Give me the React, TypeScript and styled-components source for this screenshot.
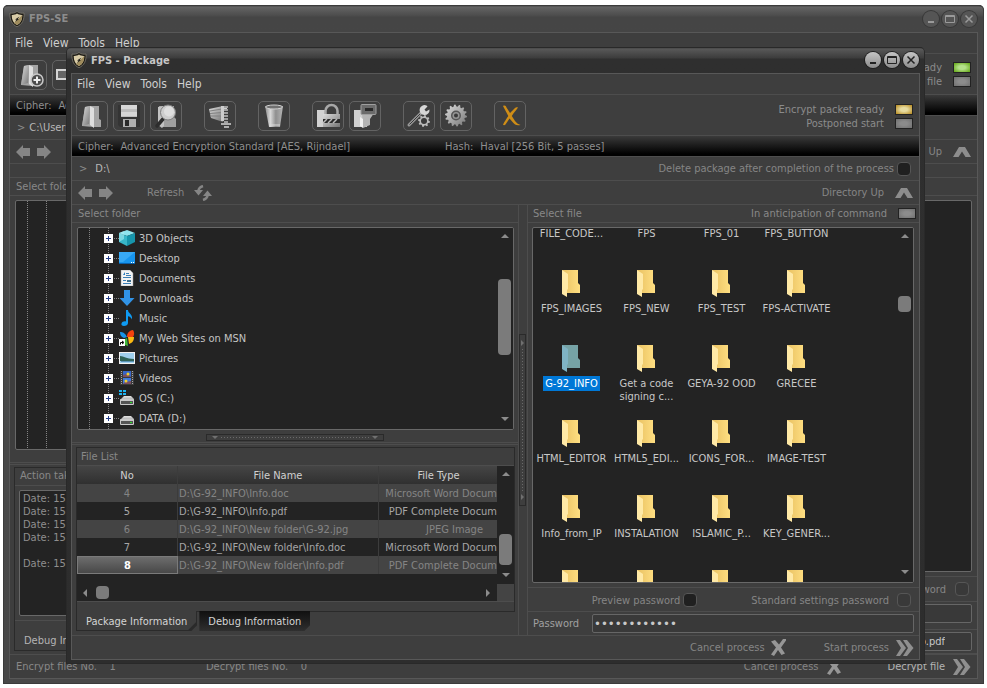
import React from "react";
import styled, { createGlobalStyle, css } from "styled-components";

const FONT = '"DejaVu Sans Condensed", "DejaVu Sans", sans-serif';

const GlobalStyle = createGlobalStyle`
  *, *::before, *::after { box-sizing: border-box; }
  body { margin: 0; background: #fff; font: 11px/15px ${FONT}; color: #888; }
  button, input { font: inherit; color: inherit; margin: 0; }
  button { padding: 0; border: 0; background: none; cursor: default; }
  ul { list-style: none; margin: 0; padding: 0; }
`;

/* ---------- window chrome ---------- */

const Desktop = styled.div`
  position: relative;
  display: flex;
  min-height: 100vh;
  padding: 5px 3px 4px;
`;

const Frame = styled.section<{ $front?: boolean }>`
  display: flex;
  flex-direction: column;
  border-radius: 5px 5px 0 0;
  ${(p) =>
    p.$front
      ? css`
          position: absolute;
          inset: 47px 62px 24px 66px;
          padding: 0 5px 4px;
          background: linear-gradient(#303030 0, #585858 2px, #3c3c3c 11px, #2f2f2f 12px, #2d2d2d 100%);
          box-shadow: inset 0 0 0 1px #292929;
        `
      : css`
          flex: 1;
          padding: 0 6px 5px;
          background: linear-gradient(#303030 0, #646464 2px, #4b4b4b 11px, #454545 12px, #484848 100%);
          box-shadow: inset 0 0 0 1px #3b3b3b;
        `}
`;

const TitleBar = styled.header<{ $front?: boolean }>`
  display: flex;
  align-items: center;
  gap: 4px;
  height: ${(p) => (p.$front ? 26 : 27)}px;
  padding-right: 1px;
  color: ${(p) => (p.$front ? "#c6c6c6" : "#8c8c8c")};
`;

const Title = styled.h1`
  flex: 1;
  margin: 0;
  font-size: 11px;
  font-weight: bold;
`;

const WindowButtons = styled.div`
  display: flex;
  gap: 3px;
`;

const RoundButton = styled.button<{ $front?: boolean }>`
  width: 16px;
  height: 16px;
  border-radius: 50%;
  color: ${(p) => (p.$front ? "#222" : "#9a9a9a")};
  background: ${(p) => (p.$front ? "linear-gradient(#c4c4c4, #8c8c8c)" : "#555")};
  box-shadow: 0 0 0 1px ${(p) => (p.$front ? "#1f1f1f" : "#383838")};
  svg { display: block; }
`;

const Body = styled.div`
  display: flex;
  flex: 1;
  flex-direction: column;
  min-height: 0;
  border: 1px solid #585858;
  background: #3e3e3e;
`;

const Row = styled.div<{ $h: number; $pad?: string }>`
  display: flex;
  flex: none;
  align-items: center;
  height: ${(p) => p.$h}px;
  padding: ${(p) => p.$pad ?? "0 5px"};
  border-bottom: 1px solid #4d4d4d;
`;

const FooterRow = styled(Row)`
  border-top: 1px solid #4d4d4d;
  border-bottom: 0;
`;

const MenuBar = styled.nav`
  display: flex;
  gap: 10px;
  font-size: 12px;
  color: #cfcfcf;
`;

const Spacer = styled.span`
  flex: 1;
`;

/* ---------- toolbar ---------- */

const ToolGroups = styled.div`
  display: flex;
  flex: 1;
  gap: 22px;
`;

const ToolGroup = styled.div`
  display: flex;
  gap: 5px;
`;

const ToolButton = styled.button`
  display: grid;
  place-items: center;
  width: 32px;
  height: 30px;
  border: 1px solid #636363;
  border-radius: 5px;
`;

const StatusList = styled.ul`
  color: #8b8b8b;
`;

const StatusItem = styled.li`
  display: flex;
  align-items: center;
  justify-content: flex-end;
  gap: 11px;
  height: 14px;
`;

const ledColors = {
  off: ["#8c8c8c", "#6f6f6f"],
  green: ["#b4e08a", "#5fa40e"],
  amber: ["#e6dba0", "#b4861a"],
};

const Led = styled.span<{ $c: keyof typeof ledColors }>`
  display: inline-block;
  width: 18px;
  height: 11px;
  border: 1px solid #222;
  background: radial-gradient(ellipse, ${(p) => ledColors[p.$c][0]} 30%, ${(p) => ledColors[p.$c][1]});
`;

const CipherBar = styled(Row)`
  color: #8f8f8f;
  background: linear-gradient(#3a3a3a, #000 90%);
`;

const CipherCell = styled.dl`
  display: flex;
  gap: 7px;
  width: 367px;
  margin: 0;
  white-space: nowrap;
  dd { margin: 0; }
`;

const Path = styled.span<{ $gap: number }>`
  display: flex;
  gap: ${(p) => p.$gap}px;
  color: #b8b8b8;
  i { font-style: normal; color: #8a8a8a; }
`;

const TextButton = styled.button<{ $gap?: number; $bright?: boolean }>`
  display: flex;
  align-items: center;
  gap: ${(p) => p.$gap ?? 11}px;
  color: ${(p) => (p.$bright ? "#b4b4b4" : "#858585")};
  white-space: nowrap;
`;

const NavArrows = styled.div`
  display: flex;
  gap: 5px;
  margin-right: 34px;
  svg { display: block; }
`;

const CheckLabel = styled.label<{ $gap?: number }>`
  display: flex;
  align-items: center;
  gap: ${(p) => p.$gap ?? 3}px;
  color: #858585;
`;

const Check = styled.input.attrs({ type: "checkbox" })`
  appearance: none;
  width: 14px;
  height: 14px;
  border: 1px solid #565656;
  border-radius: 4px;
  background: #202020;
  &:disabled { background: #393939; }
`;

/* ---------- panes ---------- */

const Panes = styled.main`
  display: flex;
  flex: 1;
  min-height: 0;
`;

const LeftPane = styled.section`
  display: flex;
  flex: 446 0 0;
  flex-direction: column;
  min-width: 0;
  border-right: 1px solid #4d4d4d;
`;

const RightPane = styled.section`
  display: flex;
  flex: 391 0 0;
  flex-direction: column;
  min-width: 0;
  border-left: 1px solid #4d4d4d;
`;

const Well = styled.div<{ $m: string }>`
  display: flex;
  flex: 1;
  min-height: 0;
  margin: ${(p) => p.$m};
  overflow: hidden;
  border: 1px solid #686868;
  border-radius: 2px;
  background: #232323;
`;

const Tree = styled.ul<{ $x1: number; $x2: number }>`
  flex: 1;
  overflow: hidden;
  color: #c4c4c4;
  background-image: linear-gradient(#848484 50%, transparent 50%), linear-gradient(#848484 50%, transparent 50%);
  background-position: ${(p) => p.$x1}px 0, ${(p) => p.$x2}px 0;
  background-size: 1px 2px;
  background-repeat: repeat-y;
`;

const TreeItem = styled.li`
  display: flex;
  align-items: center;
  height: 20px;
  padding-left: 26px;
`;

const Expander = styled.button`
  display: block;
  width: 9px;
  height: 9px;
  background: #fff;
  svg { display: block; }
`;

const Branch = styled.span`
  width: 6px;
  height: 1px;
  background: repeating-linear-gradient(90deg, transparent 0 1px, #848484 1px 2px);
`;

const TreeIcon = styled.svg`
  width: 16px;
  height: 16px;
  margin-right: 4px;
`;

const ScrollTrack = styled.div<{ $dir: "v" | "h"; $pad: string; $grow?: boolean }>`
  display: flex;
  flex: ${(p) => (p.$grow ? "1" : "none")};
  align-items: center;
  flex-direction: ${(p) => (p.$dir === "v" ? "column" : "row")};
  padding: ${(p) => p.$pad};
  background: #232323;
`;

const Gap = styled.span<{ $n: number }>`
  flex: ${(p) => p.$n} 0 0;
`;

const Thumb = styled.span<{ $w: number; $h: number }>`
  width: ${(p) => p.$w}px;
  height: ${(p) => p.$h}px;
  border-radius: 4px;
  background: #7b7b7b;
`;

const SplitRow = styled.div`
  display: flex;
  flex: none;
  align-items: flex-start;
  justify-content: center;
  height: 13px;
  padding-top: 4px;
  border-bottom: 1px solid #4d4d4d;
`;

const DoubleRule = styled.div<{ $h: number }>`
  flex: none;
  height: ${(p) => p.$h}px;
  border-top: 1px solid #3e3e3e;
  border-bottom: 1px solid #4d4d4d;
`;

const SplitColumn = styled.div`
  display: flex;
  flex: none;
  align-items: center;
  width: 8px;
`;

const Handle = styled.div<{ $v?: boolean }>`
  display: flex;
  align-items: center;
  justify-content: space-between;
  flex-direction: ${(p) => (p.$v ? "column" : "row")};
  width: ${(p) => (p.$v ? 7 : 178)}px;
  height: ${(p) => (p.$v ? 172 : 7)}px;
  padding: ${(p) => (p.$v ? "5px 0" : "0 5px")};
  border: 1px solid #2a2a2a;
  &::before, &::after {
    content: "";
    border: solid transparent;
    border-width: ${(p) => (p.$v ? "3px 0 3px 3px" : "3px 3px 0 3px")};
    border-${(p) => (p.$v ? "left" : "top")}-color: #707070;
  }
`;

const Dots = styled.span<{ $v?: boolean }>`
  flex: 1;
  margin: ${(p) => (p.$v ? "3px 0" : "0 3px")};
  ${(p) => (p.$v ? "width" : "height")}: 1px;
  background: repeating-linear-gradient(${(p) => (p.$v ? "180deg" : "90deg")}, #6a6a6a 0 1px, transparent 1px 3px);
`;

const Group = styled.div<{ $m: string }>`
  display: flex;
  flex: none;
  flex-direction: column;
  margin: ${(p) => p.$m};
  border: 1px solid #2a2a2a;
`;

const GroupCaption = styled.div<{ $h: number; $pad: string }>`
  flex: none;
  height: ${(p) => p.$h}px;
  padding: ${(p) => p.$pad};
  border-bottom: 1px solid #4d4d4d;
  white-space: nowrap;
  overflow: hidden;
`;

const TableArea = styled.div`
  display: flex;
  height: 118px;
  background: #232323;
`;

const TableClip = styled.div`
  flex: 1;
  min-width: 0;
`;

const Table = styled.table`
  width: 100%;
  table-layout: fixed;
  border-collapse: separate;
  border-spacing: 0;
  th, td {
    height: 18px;
    padding: 1px 1px 0;
    overflow: hidden;
    white-space: nowrap;
    font-weight: normal;
    border-right: 1px solid #3c3c3c;
  }
  th:last-child, td:last-child { padding-right: 0; border-right: 0; }
  th { color: #d0d0d0; background: linear-gradient(#454545, #303030); }
`;

const BodyRow = styled.tr<{ $alt: boolean; $selected?: boolean }>`
  color: ${(p) => (p.$alt ? "#848484" : "#a6a6a6")};
  background: ${(p) => (p.$alt ? "#444" : "#232323")};
  td:first-child {
    text-align: center;
    ${(p) =>
      p.$selected &&
      css`
        padding-top: 0;
        color: #fff;
        font-weight: bold;
        border: 1px solid #7a7a7a;
        background: linear-gradient(#6d6d6d, #484848);
      `}
  }
`;

const TypeText = styled.span<{ $short: boolean }>`
  display: block;
  padding-right: ${(p) => (p.$short ? 14 : 0)}px;
  text-align: right;
`;

const HScrollRow = styled.div`
  display: flex;
  height: 17px;
  padding-right: 17px;
  background: #444;
`;

const GroupFoot = styled.div`
  height: 10px;
  border-top: 1px solid #4d4d4d;
`;

const Tabs = styled.div<{ $m: string }>`
  display: flex;
  flex: none;
  gap: 2px;
  margin: ${(p) => p.$m};
`;

const Tab = styled.button<{ $active?: boolean }>`
  height: 20px;
  padding: 0 9px;
  margin-top: -1px;
  color: #d4d4d4;
  white-space: nowrap;
  clip-path: polygon(0 0, 100% 0, 100% calc(100% - 6px), calc(100% - 6px) 100%, 0 100%);
  ${(p) =>
    p.$active
      ? css`
          padding-top: 1px;
          border: solid #2a2a2a;
          border-width: 0 1px 1px;
          background: linear-gradient(135deg, #3e3e3e calc(100% - 6px), #2a2a2a calc(100% - 5px));
        `
      : css`
          background: linear-gradient(#101010, #2f2f2f);
        `}
`;

const FileGrid = styled.ul`
  display: grid;
  flex: 1;
  grid-template-columns: repeat(4, 75px);
  grid-auto-rows: 75px;
  margin-top: -33px;
  padding-left: 1px;
  color: #c8c8c8;
`;

const FileItem = styled.li`
  display: flex;
  flex-direction: column;
  align-items: center;
  gap: 4px;
  svg { flex: none; }
`;

const FileName = styled.span<{ $selected?: boolean }>`
  padding: 1px 2px;
  line-height: 13px;
  white-space: pre;
  ${(p) => p.$selected && css`color: #fff; background: #0078d7;`}
`;

const TextField = styled.input`
  flex: 1;
  min-width: 0;
  height: 19px;
  padding: 0 2px;
  border: 1px solid #666;
  border-radius: 2px;
  outline: 0;
  background: #393939;
  color: #c8c8c8;
  &[type="password"] { padding: 0 1px; font-size: 13px; }
`;

const OutputField = styled(TextField)`
  flex: none;
  width: 120px;
  padding-right: 26px;
  text-align: right;
`;

const FieldLabel = styled.label`
  width: 59px;
  color: #a0a0a0;
`;

const Log = styled.div`
  flex: 1;
  min-height: 124px;
  padding: 1px 3px;
  line-height: 13px;
  white-space: pre;
  color: #8f8f8f;
`;

const Count = styled.span<{ $w: number }>`
  width: ${(p) => p.$w}px;
  white-space: pre;
`;

/* ---------- drawings ---------- */

const Shield = () => (
  <svg width="16" height="16" viewBox="0 0 16 16">
    <path d="M8 .5c2 1.500 4.500 2 7 1.500C15.500 9 13 13.500 8 15.700 3 13.500.5 9 1 2 3.500 2.500 6 2 8 .5z" fill="#1c1a14" stroke="#7d7a70" strokeWidth=".8" />
    <path d="M8 2.500c1.700 1.200 3.300 1.500 5.300 1.400C13.300 9 11.500 12.200 8 14 4.500 12.200 2.700 9 2.700 3.900 4.700 4 6.300 3.700 8 2.500z" fill="#d8cba6" />
    <path d="M13.300 3.900C13.300 9 11.500 12.200 8 14L5 12z" fill="#a08d5e" />
    <path d="M10.500 5.500 6 8.500h1.500L6 11l4-3H8.700z" fill="#1c1a14" />
  </svg>
);

const Gradients = () => (
  <svg width="0" height="0" aria-hidden="true" display="block">
    <defs>
      <linearGradient id="metal" x1="0" y1="0" x2="1" y2="1">
        <stop offset="0" stopColor="#dcdcdc" />
        <stop offset="0.5" stopColor="#a9a9a9" />
        <stop offset="1" stopColor="#747474" />
      </linearGradient>
      <linearGradient id="shine" x1="0" y1="0" x2="1" y2="0">
        <stop offset="0" stopColor="#8a8a8a" />
        <stop offset="0.3" stopColor="#d8d8d8" />
        <stop offset="0.6" stopColor="#8f8f8f" />
        <stop offset="1" stopColor="#b5b5b5" />
      </linearGradient>
      <linearGradient id="folder" x1="0" y1="0" x2="1" y2="0">
        <stop offset="0" stopColor="#e9c162" />
        <stop offset="1" stopColor="#ffdf82" />
      </linearGradient>
      <linearGradient id="drive" x1="0" y1="0" x2="0" y2="1">
        <stop offset="0" stopColor="#e4e4e4" />
        <stop offset="1" stopColor="#a8a8a8" />
      </linearGradient>
    </defs>
  </svg>
);

const M = "url(#metal)";

const OpenFolder = ({ plus }: { plus?: boolean }) => (
  <svg width="26" height="26" viewBox="0 0 26 26">
    <path d="M6 4 11 3h9v13l2 1v7h-8L3 23z" fill="#a4a4a4" />
    <path d="M6 4 11 3l-1 18-7 2z" fill={M} />
    <path d="m11 3 4 2v20l-4-3z" fill="#dedede" />
    {plus && (
      <g>
        <circle cx="19" cy="18" r="6" fill="#4c4c4c" stroke="#c8c8c8" strokeWidth="1.500" />
        <path d="M19 14.500v7M15.500 18h7" stroke="#eee" strokeWidth="2" />
      </g>
    )}
  </svg>
);
const Floppy = () => (
  <svg width="26" height="26" viewBox="0 0 26 26">
    <path d="M2 2h22v22H4l-2-2z" fill="#343434" />
    <rect x="5" y="2" width="16" height="12" fill="#bdbdbd" />
    <path d="M5 2h16v4H5zM5 9h16v4H5z" fill="#d6d6d6" />
    <rect x="7" y="16" width="13" height="8" fill="#b0b0b0" />
    <rect x="9" y="17" width="4" height="6" fill="#2a2a2a" />
  </svg>
);
const SearchFolder = () => (
  <svg width="26" height="26" viewBox="0 0 26 26">
    <path d="M6 3h15v11l2 2v8H9z" fill="#a0a0a0" />
    <path d="m5 4 6-1v20l-2 2-4-3z" fill="#c2c2c2" />
    <path d="m10 16-6 7" stroke="#2d2d2d" strokeWidth="3.500" strokeLinecap="round" />
    <circle cx="15" cy="9.500" r="7.500" fill="#cdcdcd" stroke="#7e7e7e" strokeWidth="1" />
    <circle cx="16" cy="8.500" r="5" fill="#dedede" />
  </svg>
);
const Clamp = () => (
  <svg width="26" height="26" viewBox="0 0 26 26">
    <path d="m2 6 14-3v16L4 15z" fill={M} />
    <path d="m3 8 12-2M3 10.500l12-1M3 13h12" stroke="#808080" fill="none" />
    <path d="M14 3h6v4h-3v11h-3z" fill="#cdcdcd" />
    <path d="M19 3v19" stroke="#a0a0a0" strokeWidth="4" strokeDasharray="2 1" />
    <path d="M14 21h10M17 24h5" stroke="#b0b0b0" strokeWidth="2" />
  </svg>
);
const Bin = () => (
  <svg width="26" height="26" viewBox="0 0 26 26">
    <path d="M4 3h18l-3 21H8z" fill="url(#shine)" />
    <ellipse cx="13" cy="4" rx="8.500" ry="2" fill="#707070" stroke="#cfcfcf" />
    <path d="M8 22h11" stroke="#d8d8d8" />
  </svg>
);
const LockFolder = () => (
  <svg width="26" height="26" viewBox="0 0 26 26">
    <path d="M2 7h8v17H2z" fill="#d2d2d2" />
    <path d="M10.500 12V8a6 6 0 0 1 12 0v4" fill="none" stroke="#a8a8a8" strokeWidth="2.500" />
    <rect x="8" y="11" width="17" height="13" fill={M} />
    <rect x="8" y="16" width="17" height="4" fill="#2c2c2c" />
    <path d="m8 20 4-4M13 20l4-4M18 20l4-4" stroke="#bbb" strokeWidth="1.500" />
  </svg>
);
const SaveFolder = () => (
  <svg width="26" height="26" viewBox="0 0 26 26">
    <path d="M2 7h13v17H2z" fill="#d0d0d0" />
    <path d="M10 10h12l-4 6v6l-7 3z" fill="#b4b4b4" />
    <path d="m8 14 3 2v9l-3-2z" fill="#f0f0f0" />
    <rect x="9" y="1.500" width="15" height="10" rx="1" fill="#6b6b6b" stroke="#9f9f9f" />
    <rect x="13" y="5" width="8" height="3" fill="#2a2a2a" />
  </svg>
);

const gearPath = (cx: number, cy: number, outer: number, inner: number, n: number) => {
  const pts: string[] = [];
  for (let i = 0; i < n * 4; i++) {
    const r = i % 4 < 2 ? outer : inner;
    const a = ((i + 0.5) / (n * 4)) * Math.PI * 2;
    pts.push(`${(cx + r * Math.cos(a)).toFixed(2)} ${(cy + r * Math.sin(a)).toFixed(2)}`);
  }
  return `M${pts.join("L")}z`;
};

const WrenchGear = () => (
  <svg width="26" height="26" viewBox="0 0 26 26">
    <path d="M3 22 16 9" stroke="#9a9a9a" strokeWidth="3" strokeLinecap="round" />
    <path d="M3.500 21.500 14 11" stroke="#3a3a3a" strokeWidth="1" />
    <path d="M21.500 3.500 18.500 6.500l1.500 2 3.500-2A5 5 0 1 1 20.500 2.500z" fill="#d6d6d6" />
    <path d={gearPath(18, 18, 6, 4.5, 8)} fill="#bcbcbc" />
    <circle cx="18" cy="18" r="3" fill="#3a3a3a" />
  </svg>
);
const Gear = () => (
  <svg width="26" height="26" viewBox="0 0 26 26">
    <path d={gearPath(13, 12.5, 11, 9, 14)} fill={M} />
    <circle cx="13" cy="12.500" r="5" fill="#565656" />
    <circle cx="13" cy="12.500" r="3.500" fill="#949494" />
    <circle cx="13" cy="12.500" r="2" fill="#3a3a3a" />
  </svg>
);
const OrangeCross = () => (
  <svg width="26" height="26" viewBox="0 0 26 26">
    <path d="M6 3c2-1 3 0 3.500 1.500L13 10l5-5c1-1 2-1 3-.5-2 3-4.500 5.500-6.200 8.500L18 18c1.500 2 3 3 5.500 4-4 1-6-.5-7.500-2.500l-3.500-4c-1.500 2-2.500 4-4 6-.8 1-2 .8-2.500.3 1.500-3.500 3.500-6 5.300-8.800z" fill="#cf8d16" />
  </svg>
);
const ScanBox = () => (
  <svg width="26" height="26" viewBox="0 0 26 26">
    <rect x="2" y="8" width="18" height="9" fill="#666" stroke="#d4d4d4" strokeWidth="2" />
  </svg>
);

const NavArrow = ({ right }: { right?: boolean }) => (
  <svg width="15" height="14" viewBox="0 0 15 14">
    <path d={right ? "M15 7 8 0v3H1v8h7v3z" : "M0 7 7 0v3h7v8H7v3z"} fill="#858585" />
  </svg>
);
const RefreshIcon = () => (
  <svg width="18" height="16" viewBox="0 0 18 16" fill="none" stroke="#858585" strokeWidth="2.500">
    <path d="M4.500 6C4.500 3 6 2 9 1M13.500 10c0 3-1.500 4-4.500 5" />
    <path d="M0 5h9l-4.500 5.500zM9 11h9l-4.500-5.500z" fill="#858585" stroke="none" />
  </svg>
);
const UpIcon = () => (
  <svg width="18" height="10" viewBox="0 0 18 10">
    <path d="M0 10 6 0h6l6 10h-5.500L9 4.500 5.500 10z" fill="#8d8d8d" />
  </svg>
);
const CrossIcon = () => (
  <svg width="15" height="17" viewBox="0 0 15 17">
    <path d="M0 2.500 4 1l4 4.500L12 0h3v1.500L10 8.500l4 6-3.500 1.500L7 11l-4 6-3-1.500L5 8.500z" fill="#969696" />
  </svg>
);
const ChevronsIcon = () => (
  <svg width="18" height="16" viewBox="0 0 18 16">
    <path d="M0 0h4l6 8-6 8H0l5-8zM7 0h4l6.500 8L11 16H7l5-8z" fill="#8f8f8f" />
  </svg>
);

const arrows = { up: "M0 4 4 0l4 4z", down: "M0 0h8L4 4z", left: "M4 0v8L0 4z", right: "M0 0v8l4-4z" };
const ScrollArrow = ({ to }: { to: keyof typeof arrows }) => {
  const vertical = to === "up" || to === "down";
  return (
    <svg width={vertical ? 8 : 4} height={vertical ? 4 : 8}>
      <path d={arrows[to]} fill="#8c8c8c" />
    </svg>
  );
};

const Folder = ({ selected }: { selected?: boolean }) => (
  <svg width="22" height="27" viewBox="0 0 22 27">
    <path d="M1 0h16v13l2 2v8H6z" fill={selected ? "#76a3a6" : "url(#folder)"} />
    <path d="M1 0 7 4v15l-1 1v7l-5-3z" fill={selected ? "#7fb3c4" : "#ffe9a6"} />
  </svg>
);

const PlusBox = () => (
  <svg width="9" height="9">
    <path d="M2 4.500h5M4.500 2v5" stroke="#26408c" />
  </svg>
);

const Drive = () => (
  <>
    <path d="m3 8 2-2h7l3 3v1H1z" fill="url(#drive)" />
    <rect x="1" y="9" width="14" height="6" rx="1" fill="#c9c9c9" />
    <rect x="2" y="11" width="12" height="3" fill="#555" />
    <rect x="11" y="12" width="2" height="1" fill="#2fe12f" />
  </>
);

const treeArt: Record<string, React.ReactNode> = {
  cube: (
    <>
      <path d="m8 0 8 3-8 3-8-3z" fill="#8fe4ee" />
      <path d="m0 3 8 3v10l-8-4z" fill="#38b7c9" />
      <path d="m16 3-8 3v10l8-4z" fill="#1795ab" />
      <path d="m0 3 5-2v8l-5 3z" fill="#a8ecf3" opacity=".6" />
    </>
  ),
  desktop: (
    <>
      <rect y="2" width="16" height="12" fill="#1795ee" />
      <path d="M0 2h16L4 12H0z" fill="#38a9f5" />
      <path d="M0 13.500h16" stroke="#0a5fa8" />
      <path d="M12 12.500h3" stroke="#fff" strokeDasharray="1 1" />
    </>
  ),
  document: (
    <>
      <path d="M2 0h9l3 3v13H2z" fill="#f3f3f3" stroke="#9a9a9a" strokeWidth=".5" />
      <path d="M7 3.500h3M7 5.500h5M4 7.500h8M4 10.500h3M4 13.500h8" stroke="#3c7fb5" />
      <path d="M4 5 6 2v3z" fill="#237ac0" />
      <rect x="8" y="10" width="4" height="2" fill="#3f6f8d" />
    </>
  ),
  download: <path d="M5 0h6v8h4.500L8 16 .5 8H5z" fill="#3193e6" />,
  music: <path d="M7 0h2c0 3.500 5 4 4 9.500-.8-2-2.300-3-4-3.300V13c0 2-2 3-4 3s-3-1-2.500-2.500C3 12 5 11 7 11.500z" fill="#0f9bf2" />,
  msn: (
    <>
      <path d="M8 7c0-4 2-6.500 6-7 1.500 2 1.500 5 0 7z" fill="#f5420d" />
      <path d="M8 7C6 3 4 2 1 2c0 3 1 5 4 6z" fill="#1894e6" />
      <path d="M9 7h6c0 4-2 6-5 7z" fill="#fbb912" />
      <path d="m8 8 1 8-3-1V9z" fill="#41b63a" />
      <rect x="0" y="9" width="6" height="7" fill="#fff" />
      <path d="M1.500 14.500v-2H4M3 11l2 1.500L3 14" stroke="#000" fill="none" />
    </>
  ),
  picture: (
    <>
      <rect x=".5" y="2.500" width="15" height="11" fill="#9fd0ee" stroke="#f1f1f1" />
      <path d="M1 6c4 0 6 3 14 3v2H1z" fill="#2e6358" />
      <path d="M2 11.500h13" stroke="#5a93b5" />
    </>
  ),
  video: (
    <>
      <rect x="1" y="1" width="14" height="14" fill="#3a3a3a" />
      <path d="M2.500 1v14M13.500 1v14" stroke="#a7a7a7" strokeDasharray="1 1" />
      <rect x="4" y="1" width="8" height="6" fill="#3866c8" />
      <rect x="4" y="8" width="8" height="6" fill="#3e79dd" />
      <path d="m4 5 4-1 4 3H4zM6 12l6-1v3H4z" fill="#7a4f62" />
      <circle cx="9" cy="4" r="1.500" fill="#f2cf2c" />
      <circle cx="7" cy="11" r="1.500" fill="#f2cf2c" />
    </>
  ),
  system: (
    <>
      <Drive />
      <path d="M0 0h3v2H0zM4 0h3v2H4zM0 3h3v2H0zM4 3h3v2H4z" fill="#1db4f2" />
    </>
  ),
  drive: <Drive />,
};

/* ---------- data ---------- */

const tree: [string, string][] = [
  ["cube", "3D Objects"],
  ["desktop", "Desktop"],
  ["document", "Documents"],
  ["download", "Downloads"],
  ["music", "Music"],
  ["msn", "My Web Sites on MSN"],
  ["picture", "Pictures"],
  ["video", "Videos"],
  ["system", "OS (C:)"],
  ["drive", "DATA (D:)"],
];

const folders = [
  "FILE_CODE...", "FPS", "FPS_01", "FPS_BUTTON",
  "FPS_IMAGES", "FPS_NEW", "FPS_TEST", "FPS-ACTIVATE",
  "G-92_INFO", "Get a code\nsigning c...", "GEYA-92 OOD", "GRECEE",
  "HTML_EDITOR", "HTML5_EDI...", "ICONS_FOR...", "IMAGE-TEST",
  "Info_from_IP", "INSTALATION", "ISLAMIC_P...", "KEY_GENER...",
  "", "", "", "",
];

const files: [number, string, string][] = [
  [4, "D:\\G-92_INFO\\Info.doc", "Microsoft Word Docum"],
  [5, "D:\\G-92_INFO\\Info.pdf", "PDF Complete Docum"],
  [6, "D:\\G-92_INFO\\New folder\\G-92.jpg", "JPEG Image"],
  [7, "D:\\G-92_INFO\\New folder\\Info.doc", "Microsoft Word Docum"],
  [8, "D:\\G-92_INFO\\New folder\\Info.pdf", "PDF Complete Docum"],
];

const tools: [string, React.ReactNode][][] = [
  [["Open", <OpenFolder />], ["Save", <Floppy />], ["Search", <SearchFolder />]],
  [["Compress", <Clamp />]],
  [["Delete", <Bin />]],
  [["Lock folder", <LockFolder />], ["Save folder", <SaveFolder />]],
  [["Tools", <WrenchGear />], ["Settings", <Gear />]],
  [["Cancel", <OrangeCross />]],
];

/* ---------- shared parts ---------- */

const Chrome = ({ title, front }: { title: string; front?: boolean }) => (
  <TitleBar $front={front}>
    <Shield />
    <Title>{title}</Title>
    <WindowButtons>
      <RoundButton $front={front} aria-label="Minimize">
        <svg width="16" height="16"><path d="M5 11h6" stroke="currentColor" strokeWidth="2" /></svg>
      </RoundButton>
      <RoundButton $front={front} aria-label="Maximize">
        <svg width="16" height="16"><path d="M3.500 4.500h9v7h-9zM3.500 5.500h9" stroke="currentColor" fill="none" /></svg>
      </RoundButton>
      <RoundButton $front={front} aria-label="Close">
        <svg width="16" height="16"><path d="m4.500 4.500 7 7M11.500 4.500l-7 7" stroke="currentColor" strokeWidth="1.500" /></svg>
      </RoundButton>
    </WindowButtons>
  </TitleBar>
);

const Menu = () => (
  <MenuBar>
    {["File", "View", "Tools", "Help"].map((m) => (
      <button key={m}>{m}</button>
    ))}
  </MenuBar>
);

const NavButtons = () => (
  <NavArrows>
    <button aria-label="Back"><NavArrow /></button>
    <button aria-label="Forward"><NavArrow right /></button>
  </NavArrows>
);

/* ---------- windows ---------- */

const MainWindow = () => (
  <Frame>
    <Chrome title="FPS-SE" />
    <Body>
      <Row $h={21}><Menu /></Row>
      <Row $h={41} $pad="1px 6px 0 5px">
        <ToolGroups>
          <ToolGroup>
            <ToolButton aria-label="Add folder"><OpenFolder plus /></ToolButton>
            <ToolButton aria-label="Scan"><ScanBox /></ToolButton>
          </ToolGroup>
        </ToolGroups>
        <StatusList>
          <StatusItem>Ready<Led $c="green" /></StatusItem>
          <StatusItem>file<Led $c="off" /></StatusItem>
        </StatusList>
      </Row>
      <CipherBar $h={21} $pad="0 6px">
        <CipherCell><dt>Cipher:</dt><dd>Advanced</dd></CipherCell>
      </CipherBar>
      <Row $h={24} $pad="0 7px"><Path $gap={4}><i>&gt;</i>C:\Users</Path></Row>
      <Row $h={24} $pad="0 6px">
        <NavButtons />
        <Spacer />
        <TextButton>Up<UpIcon /></TextButton>
      </Row>
      <Row $h={14} />
      <Row $h={18} $pad="0 6px">Select folder</Row>
      <Panes>
        <LeftPane>
          <Well $m="4px 5px 0"><Tree $x1={11} $x2={30} /></Well>
          <SplitRow />
          <DoubleRule $h={2} />
          <Group $m="2px 4px 3px">
            <GroupCaption $h={18} $pad="0 5px">Action taken</GroupCaption>
            <Well $m="4px">
              <Log>{"Date: 15\nDate: 15\nDate: 15\nDate: 15\n\nDate: 15"}</Log>
            </Well>
            <FooterRow $h={30} $pad="9px 9px 0">
              <TextButton $bright>Debug Information</TextButton>
            </FooterRow>
          </Group>
        </LeftPane>
        <RightPane>
          <Well $m="4px 5px"><Spacer /></Well>
          <FooterRow $h={25} $pad="0 8px">
            <Spacer />
            <CheckLabel $gap={9}>Password<Check disabled /></CheckLabel>
          </FooterRow>
          <FooterRow $h={23}><TextField aria-label="Password" readOnly /></FooterRow>
          <DoubleRule $h={6} />
          <Row $h={24}>
            <Spacer />
            <OutputField aria-label="Output file" defaultValue="Info.pdf" />
          </Row>
        </RightPane>
      </Panes>
      <FooterRow $h={24} $pad="0 6px">
        <Count $w={190}>{"Encrypt files No.    1"}</Count>
        <Count $w={190}>{"Decrypt files No.    0"}</Count>
        <Spacer />
        <TextButton $gap={8}>Cancel process<CrossIcon /></TextButton>
        <Count $w={46} />
        <TextButton $bright $gap={8}>Decrypt file<ChevronsIcon /></TextButton>
      </FooterRow>
    </Body>
  </Frame>
);

const PackageWindow = () => (
  <Frame $front>
    <Chrome title="FPS - Package" front />
    <Body>
      <Row $h={21}><Menu /></Row>
      <Row $h={41} $pad="2px 6px 0 4px">
        <ToolGroups>
          {tools.map((group, i) => (
            <ToolGroup key={i}>
              {group.map(([name, icon]) => (
                <ToolButton key={name} aria-label={name}>{icon}</ToolButton>
              ))}
            </ToolGroup>
          ))}
        </ToolGroups>
        <StatusList>
          <StatusItem>Encrypt packet ready<Led $c="amber" /></StatusItem>
          <StatusItem>Postponed start<Led $c="off" /></StatusItem>
        </StatusList>
      </Row>
      <CipherBar $h={21} $pad="0 6px">
        <CipherCell><dt>Cipher:</dt><dd>Advanced Encryption Standard [AES, Rijndael]</dd></CipherCell>
        <CipherCell><dt>Hash:</dt><dd>Haval [256 Bit, 5 passes]</dd></CipherCell>
      </CipherBar>
      <Row $h={24} $pad="0 8px 0 7px">
        <Path $gap={8}><i>&gt;</i>D:\</Path>
        <Spacer />
        <CheckLabel>Delete package after completion of the process<Check /></CheckLabel>
      </Row>
      <Row $h={24} $pad="0 6px">
        <NavButtons />
        <TextButton $gap={10}>Refresh<RefreshIcon /></TextButton>
        <Spacer />
        <TextButton>Directory Up<UpIcon /></TextButton>
      </Row>
      <Panes>
        <LeftPane>
          <Row $h={18} $pad="0 6px">Select folder</Row>
          <Well $m="4px 4px 0 5px">
            <Tree $x1={11} $x2={30}>
              {tree.map(([art, name]) => (
                <TreeItem key={name}>
                  <Expander aria-label={`Expand ${name}`}><PlusBox /></Expander>
                  <Branch />
                  <TreeIcon viewBox="0 0 16 16">{treeArt[art]}</TreeIcon>
                  {name}
                </TreeItem>
              ))}
            </Tree>
            <ScrollTrack $dir="v" $pad="6px 2px 8px">
              <ScrollArrow to="up" />
              <Gap $n={41} />
              <Thumb $w={13} $h={76} />
              <Gap $n={63} />
              <ScrollArrow to="down" />
            </ScrollTrack>
          </Well>
          <SplitRow><Handle><Dots /></Handle></SplitRow>
          <DoubleRule $h={2} />
          <Group $m="2px 3px 0 4px">
            <GroupCaption $h={18} $pad="1px 4px">File List</GroupCaption>
            <TableArea>
              <TableClip>
                <Table>
                  <colgroup>
                    <col width="101" />
                    <col />
                    <col width="118" />
                  </colgroup>
                  <thead>
                    <tr><th>No</th><th>File Name</th><th>File Type</th></tr>
                  </thead>
                  <tbody>
                    {files.map(([no, name, type], i) => (
                      <BodyRow key={no} $alt={i % 2 === 0} $selected={no === 8}>
                        <td>{no}</td>
                        <td>{name}</td>
                        <td><TypeText $short={type.length < 12}>{type}</TypeText></td>
                      </BodyRow>
                    ))}
                  </tbody>
                </Table>
              </TableClip>
              <ScrollTrack $dir="v" $pad="6px 2px 7px">
                <ScrollArrow to="up" />
                <Gap $n={57} />
                <Thumb $w={13} $h={31} />
                <Gap $n={8} />
                <ScrollArrow to="down" />
              </ScrollTrack>
            </TableArea>
            <HScrollRow>
              <ScrollTrack $dir="h" $pad="0 7px 0 6px" $grow>
                <ScrollArrow to="left" />
                <Gap $n={9} />
                <Thumb $w={13} $h={13} />
                <Gap $n={376} />
                <ScrollArrow to="right" />
              </ScrollTrack>
            </HScrollRow>
            <GroupFoot />
          </Group>
          <Tabs $m="0 4px 4px">
            <Tab $active>Package Information</Tab>
            <Tab>Debug Information</Tab>
          </Tabs>
        </LeftPane>
        <SplitColumn><Handle $v><Dots $v /></Handle></SplitColumn>
        <RightPane>
          <Row $h={18} $pad="0 3px 0 5px">
            Select file
            <Spacer />
            <StatusItem as="span">In anticipation of command<Led $c="off" /></StatusItem>
          </Row>
          <Well $m="4px 5px 4px 4px">
            <FileGrid>
              {folders.map((name, i) => (
                <FileItem key={i}>
                  <Folder selected={name === "G-92_INFO"} />
                  {name && <FileName $selected={name === "G-92_INFO"}>{name}</FileName>}
                </FileItem>
              ))}
            </FileGrid>
            <ScrollTrack $dir="v" $pad="6px 2px 8px">
              <ScrollArrow to="up" />
              <Gap $n={58} />
              <Thumb $w={13} $h={16} />
              <Gap $n={259} />
              <ScrollArrow to="down" />
            </ScrollTrack>
          </Well>
          <FooterRow $h={24} $pad="1px 8px 0 0">
            <Spacer />
            <CheckLabel>Preview password<Check /></CheckLabel>
            <Count $w={54} />
            <CheckLabel $gap={8}>Standard settings password<Check disabled /></CheckLabel>
          </FooterRow>
          <FooterRow $h={24}>
            <FieldLabel htmlFor="password">Password</FieldLabel>
            <TextField id="password" type="password" defaultValue="package12345" />
          </FooterRow>
        </RightPane>
      </Panes>
      <FooterRow $h={24} $pad="0 5px">
        <Spacer />
        <TextButton $gap={6}>Cancel process<CrossIcon /></TextButton>
        <Count $w={38} />
        <TextButton $gap={7}>Start process<ChevronsIcon /></TextButton>
      </FooterRow>
    </Body>
  </Frame>
);

export default function App() {
  return (
    <Desktop>
      <GlobalStyle />
      <Gradients />
      <MainWindow />
      <PackageWindow />
    </Desktop>
  );
}
